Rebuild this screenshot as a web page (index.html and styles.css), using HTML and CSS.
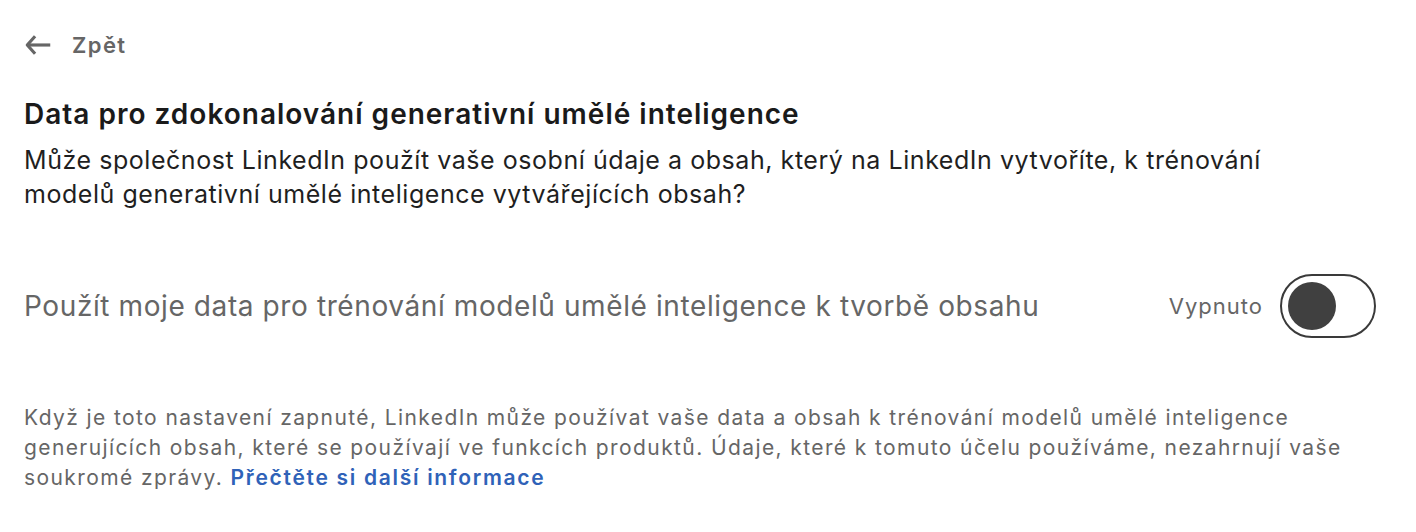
FILE: index.html
```html
<!DOCTYPE html>
<html lang="cs">
<head>
<meta charset="utf-8">
<link rel="stylesheet" href="styles.css">
</head>
<body>
<main class="page">
  <a class="back" href="#">
    <svg class="back-icon" width="28" height="28" viewBox="0 0 24 24" aria-hidden="true">
      <path d="M9.5 4.5 L2.8 12 L9.5 19.5" fill="none" stroke="currentColor" stroke-width="2.7" stroke-linejoin="round"/>
      <path d="M3.2 12 H22.5" fill="none" stroke="currentColor" stroke-width="2.7"/>
    </svg>
    <span>Zpět</span>
  </a>
  <section class="intro">
    <h1 class="title">Data pro zdokonalování generativní umělé inteligence</h1>
    <p class="question">Může společnost LinkedIn použít vaše osobní údaje a obsah, který na LinkedIn vytvoříte, k trénování modelů generativní umělé inteligence vytvářejících obsah?</p>
  </section>
  <div class="setting">
    <span class="setting-label">Použít moje data pro trénování modelů umělé inteligence k tvorbě obsahu</span>
    <div class="toggle-wrap">
      <span class="toggle-state">Vypnuto</span>
      <span class="toggle"><span class="knob"></span></span>
    </div>
  </div>
  <p class="note">Když je toto nastavení zapnuté, LinkedIn může používat vaše data a obsah k trénování modelů umělé inteligence generujících obsah, které se používají ve funkcích produktů. Údaje, které k tomuto účelu používáme, nezahrnují vaše soukromé zprávy. <a class="link" href="#">Přečtěte si další informace</a></p>
</main>
</body>
</html>
```

FILE: styles.css
```css
* { box-sizing: border-box; }
html, body { margin: 0; background: #fff; }
body {
  font-family: Inter, "Noto Sans", "Liberation Sans", sans-serif;
  color: #1f1f1f;
}
.page {
  padding: 27px 40px 0 24px;
}
.back {
  display: flex;
  align-items: center;
  gap: 20px;
  color: #666;
  text-decoration: none;
  font-size: 22px;
  letter-spacing: 1.4px;
  font-weight: 600;
  height: 36px;
}
.back-icon { flex: none; }
.intro { margin-top: 33px; }
.title {
  margin: 0;
  font-size: 28px;
  font-weight: 600;
  line-height: 36px;
  color: #1a1a1a;
  letter-spacing: 1px;
}
.question {
  margin: 11px 0 0;
  font-size: 25px;
  letter-spacing: 0.55px;
  line-height: 34px;
  color: #1f1f1f;
  max-width: 1300px;
}
.setting {
  margin-top: 63px;
  display: flex;
  align-items: center;
  justify-content: space-between;
  height: 64px;
}
.setting-label {
  font-size: 28px;
  letter-spacing: 0.6px;
  color: #666;
}
.toggle-wrap {
  display: flex;
  align-items: center;
  gap: 17px;
}
.toggle-state {
  font-size: 22px;
  letter-spacing: 1px;
  color: #666;
}
.toggle {
  width: 96px;
  height: 64px;
  border: 2px solid #3a3a3a;
  border-radius: 32px;
  display: flex;
  align-items: center;
  padding-left: 6px;
}
.knob {
  width: 48px;
  height: 48px;
  border-radius: 50%;
  background: #404040;
}
.note {
  margin: 65px 0 0;
  font-size: 21px;
  letter-spacing: 1.4px;
  line-height: 30px;
  color: #666;
  max-width: 1352px;
}
.link {
  color: #2f62b8;
  font-weight: 600;
  letter-spacing: 1.7px;
  text-decoration: none;
}
```
